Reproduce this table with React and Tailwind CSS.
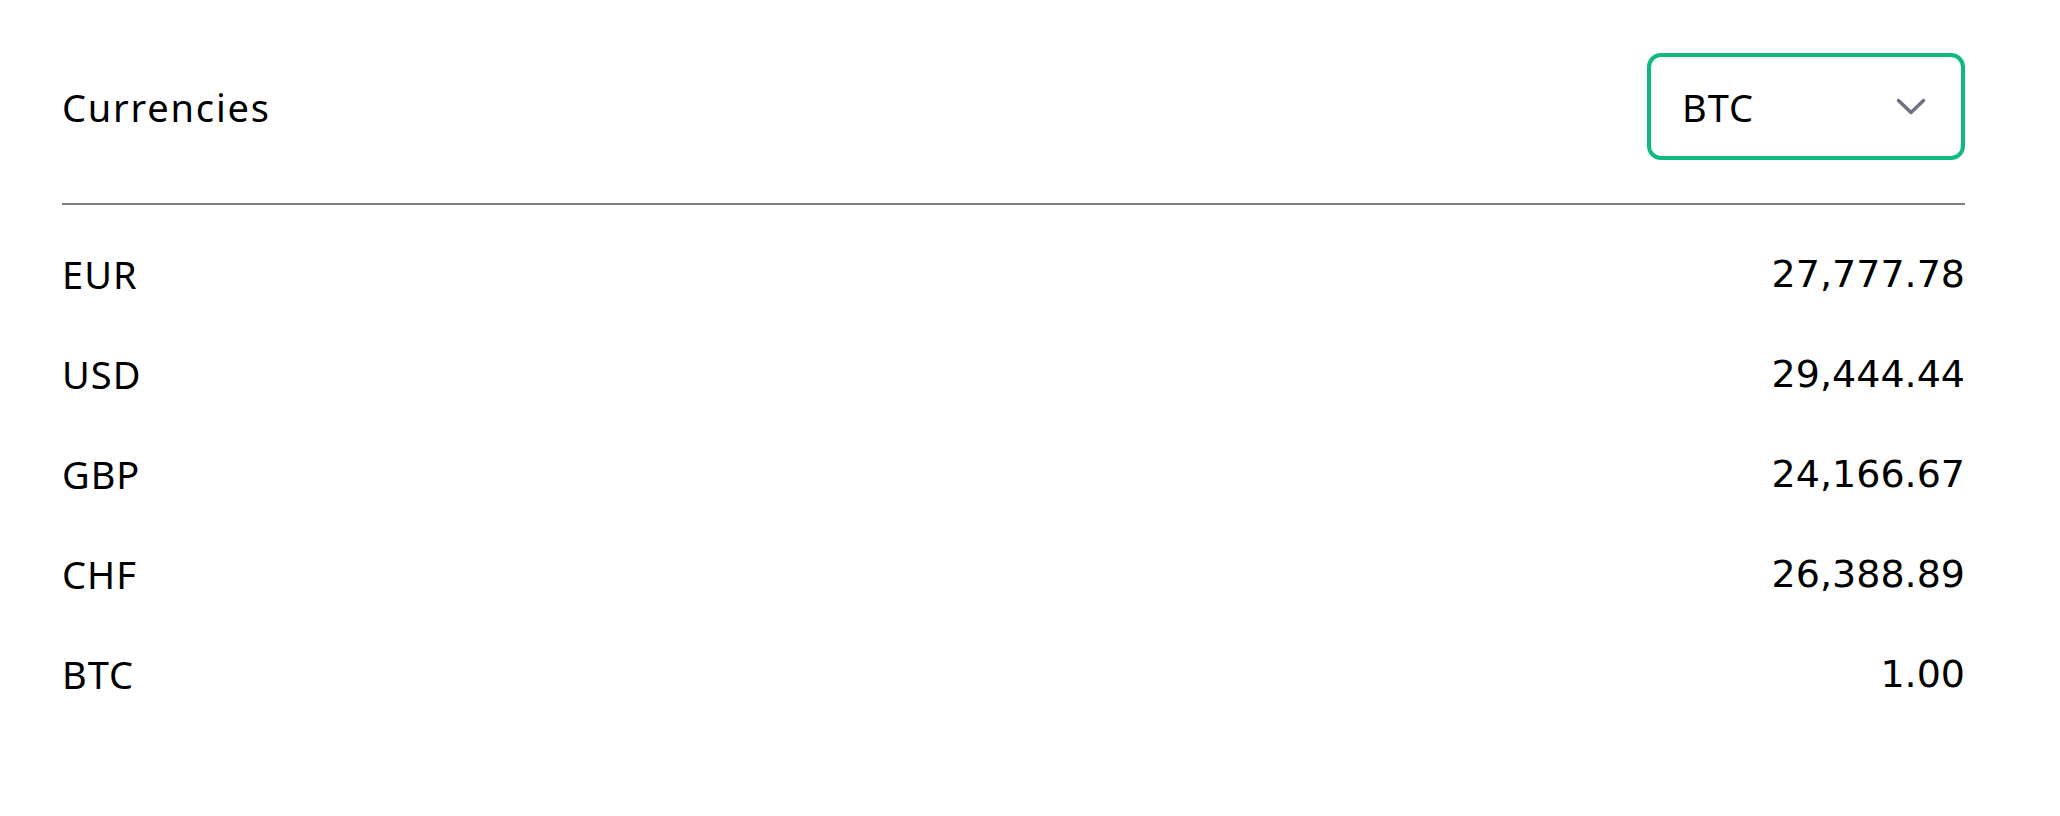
import React, { useState } from 'react';

const rates = [
  { code: 'EUR', value: '27,777.78' },
  { code: 'USD', value: '29,444.44' },
  { code: 'GBP', value: '24,166.67' },
  { code: 'CHF', value: '26,388.89' },
  { code: 'BTC', value: '1.00' },
];

const ChevronDown = () => (
  <svg width="30" height="18" viewBox="0 0 30 18" fill="none">
    <polyline
      points="2.5,2.5 15,14.5 27.5,2.5"
      stroke="#6b7280"
      strokeWidth="3.5"
      strokeLinecap="round"
      strokeLinejoin="round"
    />
  </svg>
);

const App = () => {
  const [base] = useState('BTC');

  return (
    <div className="min-h-screen bg-white pl-[62px] pr-[95px] pt-[53px] text-black">
      {/* Header */}
      <div className="flex h-[107px] items-center justify-between">
        <h2 className="font-['Noto_Sans',sans-serif] text-[38px] leading-none tracking-[1.8px]">Currencies</h2>
        <div className="flex h-[107px] w-[318px] items-center justify-between rounded-[14px] border-4 border-[#10b981] pl-[31px] pr-[35px]">
          <span className="font-['Noto_Sans',sans-serif] text-[38px] leading-none tracking-[1px]">{base}</span>
          <ChevronDown />
        </div>
      </div>

      <div className="mt-[43px] border-t-2 border-[#808080]"></div>

      {/* Rows */}
      <div className="pt-[19px]">
        {rates.map((r) => (
          <div key={r.code} className="flex h-[100px] items-center justify-between">
            <span className="font-['Noto_Sans',sans-serif] text-[38px] leading-none tracking-[1px]">{r.code}</span>
            <span className="font-['DejaVu_Sans',sans-serif] text-[38px] leading-none">{r.value}</span>
          </div>
        ))}
      </div>
    </div>
  );
};

export default App;
